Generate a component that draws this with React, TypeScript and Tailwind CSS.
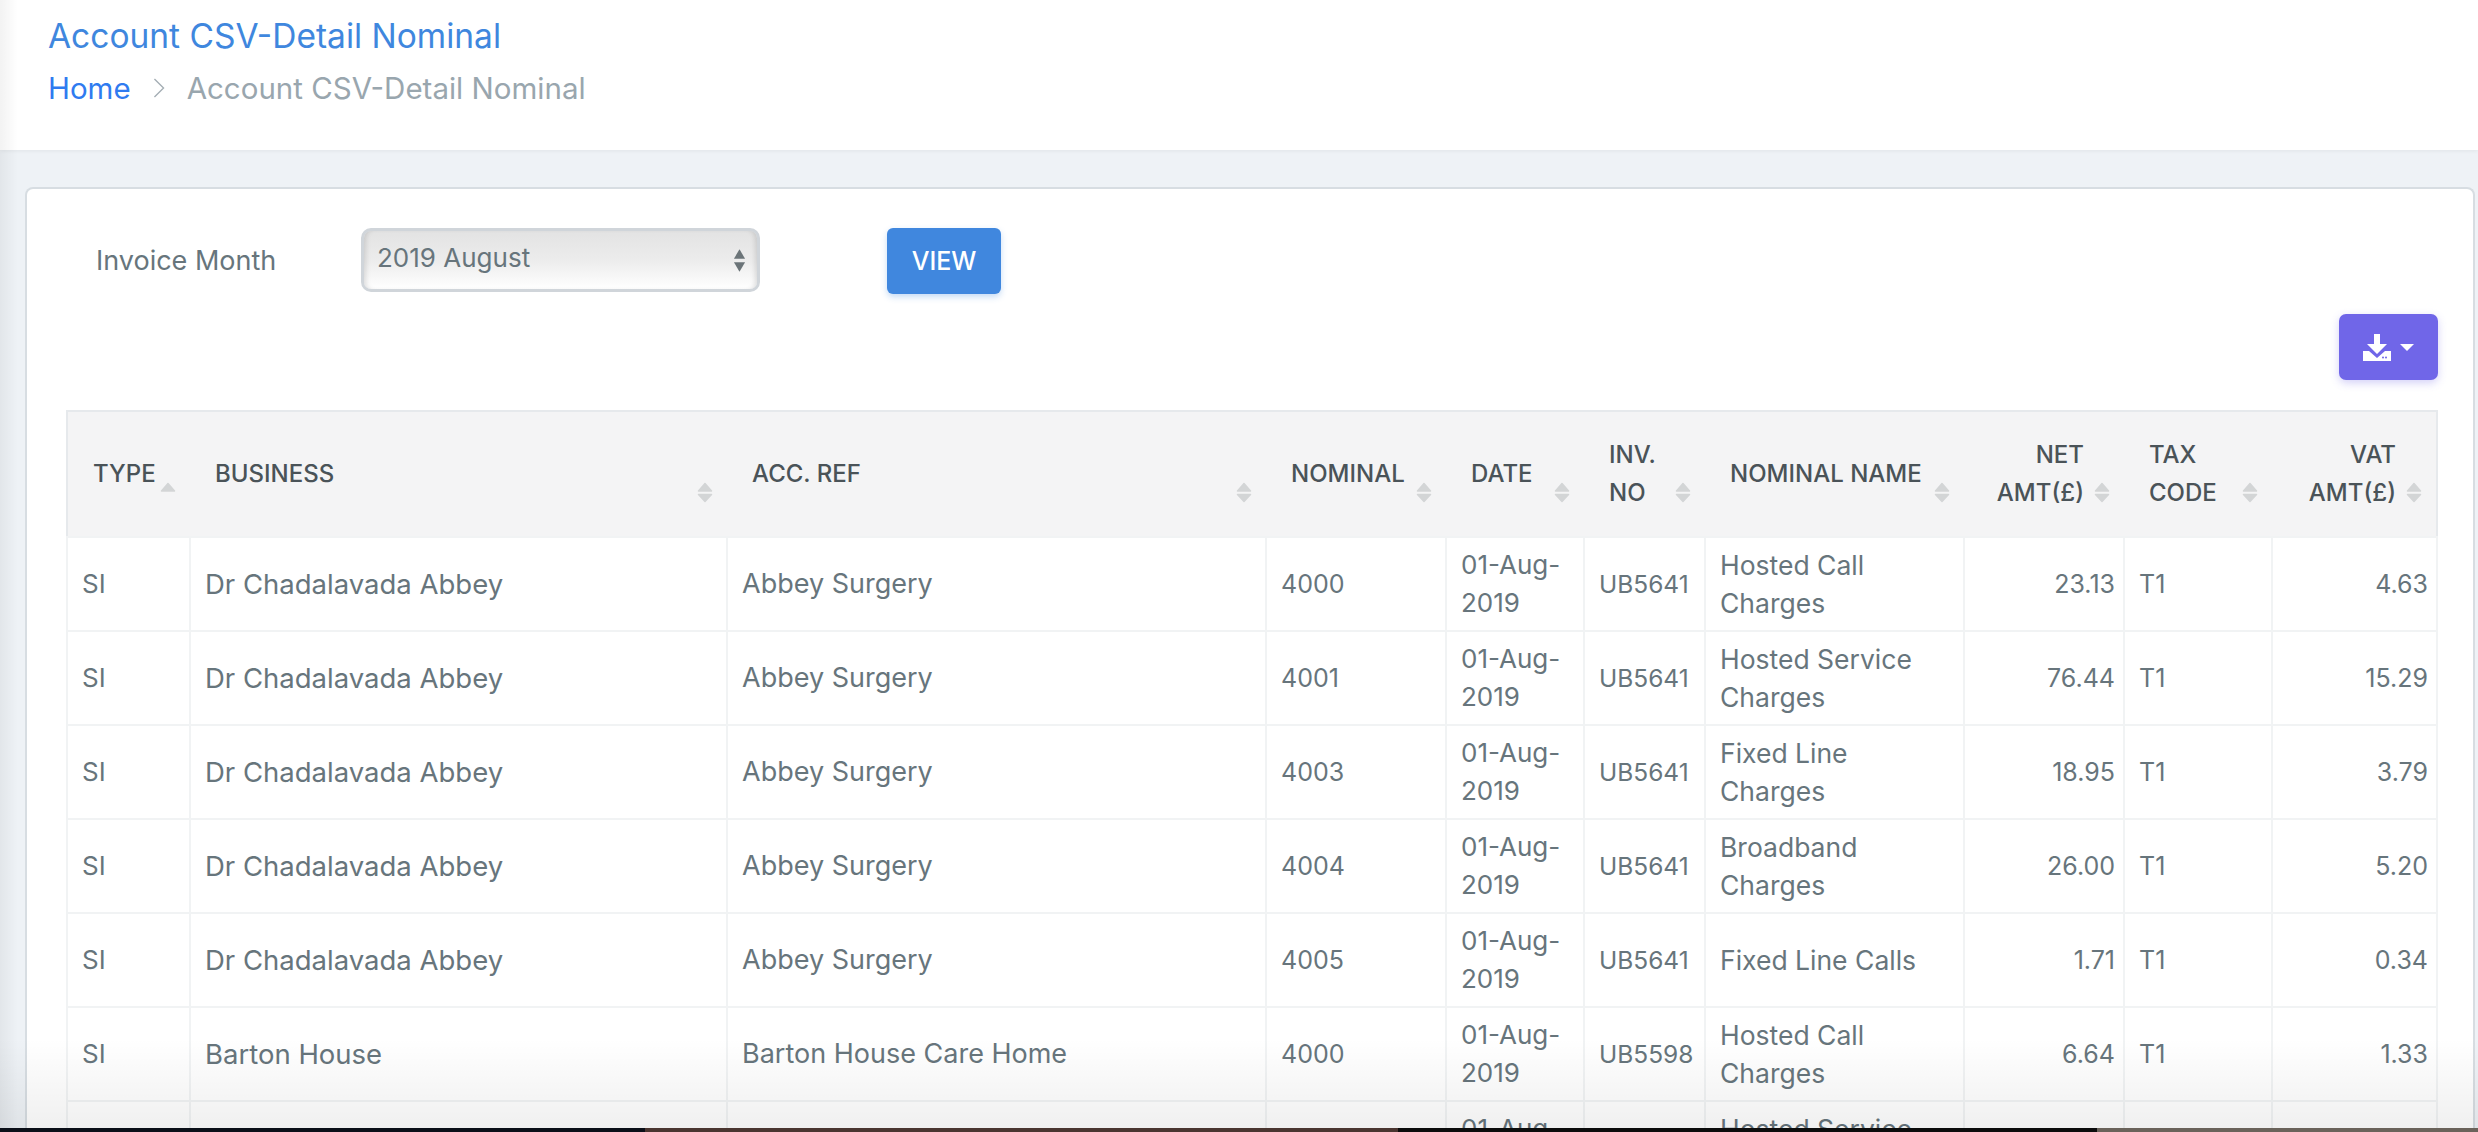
const rows = [
  ["SI", "Dr Chadalavada Abbey", "Abbey Surgery", "4000", "01-Aug-2019", "UB5641", "Hosted Call Charges", "23.13", "T1", "4.63"],
  ["SI", "Dr Chadalavada Abbey", "Abbey Surgery", "4001", "01-Aug-2019", "UB5641", "Hosted Service Charges", "76.44", "T1", "15.29"],
  ["SI", "Dr Chadalavada Abbey", "Abbey Surgery", "4003", "01-Aug-2019", "UB5641", "Fixed Line Charges", "18.95", "T1", "3.79"],
  ["SI", "Dr Chadalavada Abbey", "Abbey Surgery", "4004", "01-Aug-2019", "UB5641", "Broadband Charges", "26.00", "T1", "5.20"],
  ["SI", "Dr Chadalavada Abbey", "Abbey Surgery", "4005", "01-Aug-2019", "UB5641", "Fixed Line Calls", "1.71", "T1", "0.34"],
  ["SI", "Barton House", "Barton House Care Home", "4000", "01-Aug-2019", "UB5598", "Hosted Call Charges", "6.64", "T1", "1.33"],
  ["SI", "Barton House", "Barton House Care Home", "4001", "01-Aug-2019", "UB5598", "Hosted Service Charges", "22.00", "T1", "4.40"],
];

const columns = [
  { label: "TYPE", width: "w-[123px]", sort: "asc", cell: "pl-[14px] pr-[8px] text-[26px]" },
  { label: "BUSINESS", width: "w-[537px]", cell: "pl-[14px] pr-[8px] text-[27.5px]" },
  { label: "ACC. REF", width: "w-[539px]", cell: "pl-[14px] pr-[8px] text-[27px]" },
  { label: "NOMINAL", width: "w-[180px]", cell: "pl-[14px] pr-[8px] text-[25px]" },
  { label: "DATE", width: "w-[138px]", cell: "pl-[14px] pr-[8px] text-[26px]" },
  { label: "INV. NO", width: "w-[121px]", cell: "pl-[14px] pr-[8px] text-[24.5px]" },
  { label: "NOMINAL NAME", width: "w-[259px]", cell: "pl-[14px] pr-[8px] text-[26.5px]" },
  { label: "NET AMT(£)", width: "w-[160px]", right: true, cell: "pl-[10px] pr-[8px] text-right text-[25px]" },
  { label: "TAX CODE", width: "w-[148px]", cell: "pl-[14px] pr-[8px] text-[25px]" },
  { label: "VAT AMT(£)", width: "w-[165px]", right: true, cell: "pl-[10px] pr-[8px] text-right text-[25px]" },
];

const SortArrows = ({ sort }: { sort?: string }) => (
  <svg
    viewBox="0 0 16 21"
    className="absolute right-[14px] bottom-[33px] w-[16px] h-[21px]"
    strokeLinejoin="round"
  >
    <path d="M8 1.5 L14.5 9 H1.5 Z" fill="#d3d5d6" stroke="#d3d5d6" strokeWidth="1.5" />
    {sort !== "asc" && (
      <path d="M8 19.5 L14.5 12.5 H1.5 Z" fill="#d3d5d6" stroke="#d3d5d6" strokeWidth="1.5" />
    )}
  </svg>
);

const DownloadIcon = () => (
  <svg viewBox="0 0 28 27" className="w-[28px] h-[27px]" fill="#ffffff">
    <path d="M11 0 H17 V10 H24 L14 20 L4 10 H11 Z" />
    <path d="M0 17 H6 L14 24 L22 17 H28 V27 H0 Z" />
    <circle cx="20" cy="23.5" r="1" fill="#7066e8" />
    <circle cx="23" cy="23.5" r="1" fill="#7066e8" />
  </svg>
);

export default function App() {
  return (
    <div className="relative flex flex-col h-[1132px] overflow-hidden bg-[#eef2f6] font-['Inter','Liberation_Sans',sans-serif]">
      <header className="shrink-0 h-[150px] bg-white pl-[48px] pt-[17px] shadow-[0_1px_4px_rgba(0,0,0,0.06)]">
        <h1 className="text-[33.5px] leading-[38px] font-normal text-[#3f87de]">
          Account CSV-Detail Nominal
        </h1>
        <nav className="flex items-center mt-[14px] text-[29.5px] leading-[38px]">
          <span className="text-[#2f7bf0]">Home</span>
          <svg viewBox="0 0 12 22" className="w-[12px] h-[20px] ml-[22px] mr-[22px]" fill="none" stroke="#a4aeb4" strokeWidth="1.5">
            <path d="M1 1 L11 11 L1 21" />
          </svg>
          <span className="text-[#99a6ae]">Account CSV-Detail Nominal</span>
        </nav>
      </header>

      <main className="flex-1 min-h-0 pt-[37px] pl-[25px] pr-[3px]">
        <section className="h-full bg-white border-2 border-b-0 border-[#d7dde2] rounded-t-[8px] pl-[39px] pr-[35px]">
          <div className="flex items-start pt-[39px] pl-[30px] h-[125px]">
            <label className="w-[265px] pt-[17px] text-[27px] leading-[32px] text-[#67757c]">
              Invoice Month
            </label>
            <div className="relative w-[399px] h-[64px] rounded-[10px] border-[3px] border-[#d0d5da] bg-gradient-to-b from-[#e3e3e3] via-[#ececec] to-[#ffffff] shadow-[inset_5px_0_5px_-3px_rgba(0,0,0,0.12),inset_-5px_0_5px_-3px_rgba(0,0,0,0.12)]">
              <span className="block pl-[13px] pt-[11px] text-[26px] leading-[32px] text-[#67757c]">
                2019 August
              </span>
              <svg viewBox="0 0 14 24" className="absolute right-[11px] top-[18px] w-[13px] h-[23px]" fill="#6b7478">
                <path d="M7 0 L13 10 H1 Z" />
                <path d="M7 24 L13 14 H1 Z" />
              </svg>
            </div>
            <button className="ml-[127px] w-[114px] h-[66px] pt-[2px] rounded-[6px] bg-[#4087de] text-white text-[25px] font-medium shadow-[0_3px_6px_rgba(64,135,222,0.3)]">
              VIEW
            </button>
          </div>

          <div className="flex justify-end">
            <button className="flex items-center justify-center gap-[9px] w-[99px] h-[66px] rounded-[7px] bg-[#7066e8] shadow-[0_3px_8px_rgba(112,102,232,0.3)]">
              <DownloadIcon />
              <span className="w-0 h-0 border-x-[7px] border-x-transparent border-t-[7px] border-t-white" />
            </button>
          </div>

          <table className="mt-[30px] w-[2371px] table-fixed border-collapse border-2 border-[#e6e9ec] text-[#67757c]">
            <thead>
              <tr className="h-[126px] bg-[#f4f4f5]">
                {columns.map((col) => (
                  <th
                    key={col.label}
                    className={`${col.width} relative pl-[25px] text-[24px] leading-[38px] font-medium text-[#4a5358] ${col.right ? "pr-[40px] text-right" : "pr-[35px] text-left"}`}
                  >
                    {col.label}
                    <SortArrows sort={col.sort} />
                  </th>
                ))}
              </tr>
            </thead>
            <tbody>
              {rows.map((row, i) => (
                <tr key={i} className="h-[94px]">
                  {row.map((cell, j) => (
                    <td
                      key={j}
                      className={`border-2 border-[#f1f3f4] leading-[38px] ${columns[j].cell}`}
                    >
                      {cell}
                    </td>
                  ))}
                </tr>
              ))}
            </tbody>
          </table>
        </section>
      </main>

      {/* window shadow over the page edges */}
      <div className="absolute left-0 top-0 bottom-0 w-[18px] bg-gradient-to-r from-black/5 to-transparent pointer-events-none" />
      <div className="absolute left-0 right-0 bottom-[4px] h-[90px] bg-gradient-to-b from-transparent to-black/[0.06] pointer-events-none" />

      {/* desktop wallpaper peeking under the window */}
      <div className="relative shrink-0 flex h-[4px]">
        <div className="w-[645px] bg-[#0b0f18]" />
        <div className="w-[753px] bg-[#4a3530]" />
        <div className="w-[699px] bg-[#0c0c0c]" />
        <div className="flex-1 bg-[#6a625a]" />
      </div>
    </div>
  );
}
